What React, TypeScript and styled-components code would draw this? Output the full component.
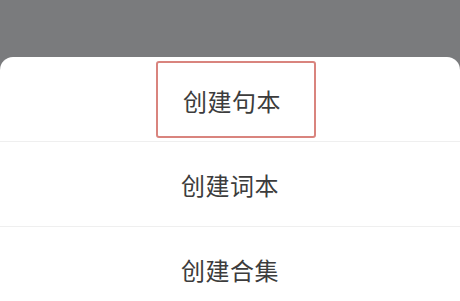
import styled, { createGlobalStyle } from "styled-components";

const GlobalStyle = createGlobalStyle`
  html, body {
    margin: 0;
    padding: 0;
    background: #7a7b7d;
  }
  body {
    font-family: "Noto Sans CJK SC", "Noto Sans", sans-serif;
  }
`;

const items = ["创建句本", "创建词本", "创建合集"];

const App = () => {
  return (
    <>
      <GlobalStyle />
      <Page>
        <Mask />
        <Sheet>
          {items.map((label, i) => (
            <Item key={label} $last={i === items.length - 1}>
              {i === 0 ? (
                <Highlight>
                  <Label>{label}</Label>
                </Highlight>
              ) : (
                <Label>{label}</Label>
              )}
            </Item>
          ))}
        </Sheet>
      </Page>
    </>
  );
};

export default App;

const Page = styled.div`
  width: 460px;
  height: 301px;
  overflow: hidden;
  display: flex;
  flex-direction: column;
`;

const Mask = styled.div`
  height: 57px;
  flex-shrink: 0;
  background: #7a7b7d;
`;

const Sheet = styled.div`
  flex: 1;
  background: #ffffff;
  border-radius: 13px 13px 0 0;
  display: flex;
  flex-direction: column;
`;

const Item = styled.div<{ $last?: boolean }>`
  height: 84px;
  flex-shrink: 0;
  display: flex;
  align-items: center;
  justify-content: center;
  border-bottom: ${(p) => (p.$last ? "none" : "1px solid #efefef")};
`;

const Highlight = styled.div`
  box-sizing: border-box;
  width: 160px;
  height: 77px;
  margin-left: 12px;
  margin-top: 1px;
  padding-right: 8px;
  padding-top: 1px;
  border: 2px solid #d9847e;
  border-radius: 3px;
  display: flex;
  align-items: center;
  justify-content: center;
`;

const Label = styled.span`
  font-size: 24px;
  color: #3c3c3c;
  letter-spacing: 0.5px;
  line-height: 1;
  padding-top: 2px;
`;
